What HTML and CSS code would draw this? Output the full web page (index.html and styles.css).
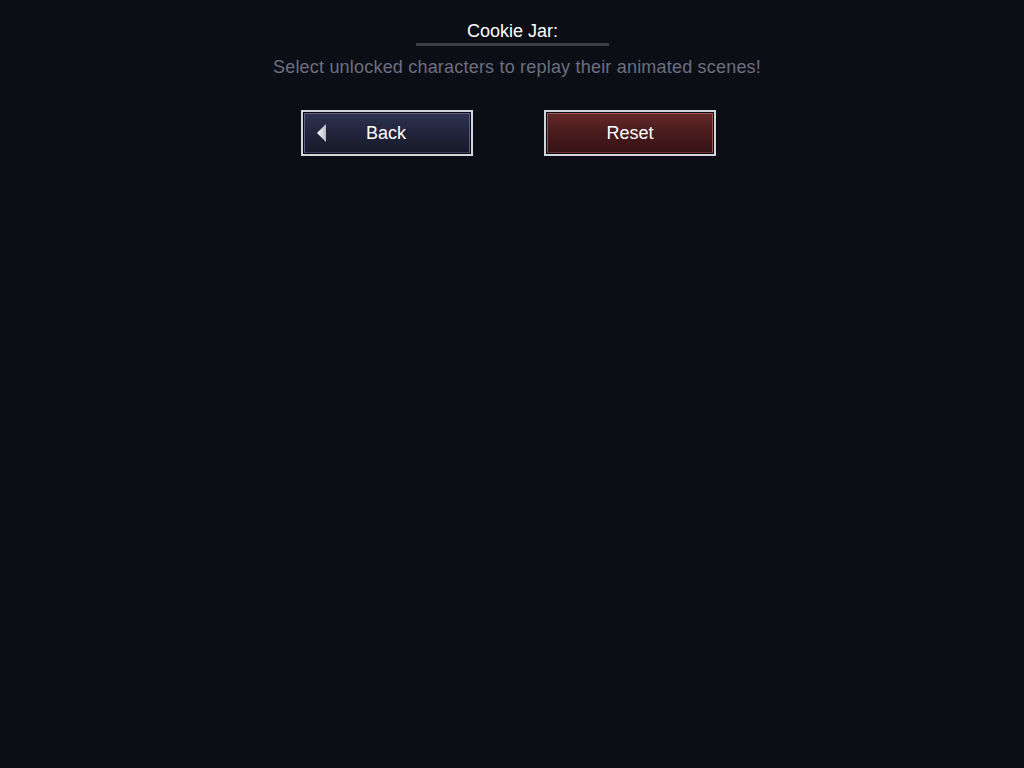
FILE: index.html
```html
<!DOCTYPE html>
<html>
<head>
<meta charset="utf-8">
<link rel="stylesheet" href="styles.css">
</head>
<body>
<main class="screen">
  <header class="head">
    <h1 class="title">Cookie Jar:</h1>
    <p class="subtitle">Select unlocked characters to replay their animated scenes!</p>
  </header>
  <div class="actions">
    <button class="btn btn-back">
      <span class="btn-inner">
        <svg class="arrow" width="10" height="18" viewBox="0 0 10 18">
          <defs>
            <linearGradient id="ag" x1="0" y1="0" x2="1" y2="0">
              <stop offset="0" stop-color="#ffffff"/>
              <stop offset="1" stop-color="#b8bac8"/>
            </linearGradient>
          </defs>
          <polygon points="9,0 9,18 0,9" fill="url(#ag)"/>
        </svg>
        <span class="label">Back</span>
      </span>
    </button>
    <button class="btn btn-reset">
      <span class="btn-inner">
        <span class="label">Reset</span>
      </span>
    </button>
  </div>
</main>
</body>
</html>
```
FILE: styles.css
```css
html, body {
  margin: 0;
  padding: 0;
  background: #0c0e16;
  height: 100%;
}
.screen {
  width: 1024px;
  height: 768px;
  font-family: "Liberation Sans", Arial, sans-serif;
  display: flex;
  flex-direction: column;
  align-items: center;
}
.head {
  display: flex;
  flex-direction: column;
  align-items: center;
  padding-top: 20px;
}
.title {
  margin: 0;
  font-size: 18px;
  font-weight: normal;
  color: #ffffff;
  line-height: 22px;
  width: 193px;
  text-align: center;
  border-bottom: 3px solid #3a3c46;
  padding-bottom: 1px;
  margin-left: 1px;
}
.subtitle {
  margin: 10px 0 0 0;
  padding-left: 10px;
  font-size: 18px;
  line-height: 22px;
  letter-spacing: 0.2px;
  color: #6c6e80;
}
.actions {
  display: flex;
  gap: 71px;
  margin-top: 32px;
  margin-right: 7px;
}
.btn {
  width: 172px;
  height: 46px;
  padding: 1px;
  border: 2px solid #d4d4dc;
  background: #0a0a10;
  box-sizing: border-box;
  font-family: inherit;
  cursor: pointer;
  display: flex;
}
.btn-inner {
  flex: 1;
  position: relative;
  display: flex;
  align-items: center;
  justify-content: center;
  box-sizing: border-box;
}
.btn-back .btn-inner {
  background: linear-gradient(#2e3250 0%, #22253c 45%, #181a2a 100%);
  border: 1px solid #5c6088;
  border-bottom-color: #3a3c58;
}
.btn-reset .btn-inner {
  background: linear-gradient(#64282a 0%, #4a1c1e 45%, #361214 100%);
  border: 1px solid #a05458;
  border-bottom-color: #6a3234;
}
.label {
  color: #ffffff;
  font-size: 18px;
  line-height: 22px;
}
.btn-back .label {
  margin-left: -2px;
}
.arrow {
  position: absolute;
  left: 12px;
  top: 10px;
}
```
